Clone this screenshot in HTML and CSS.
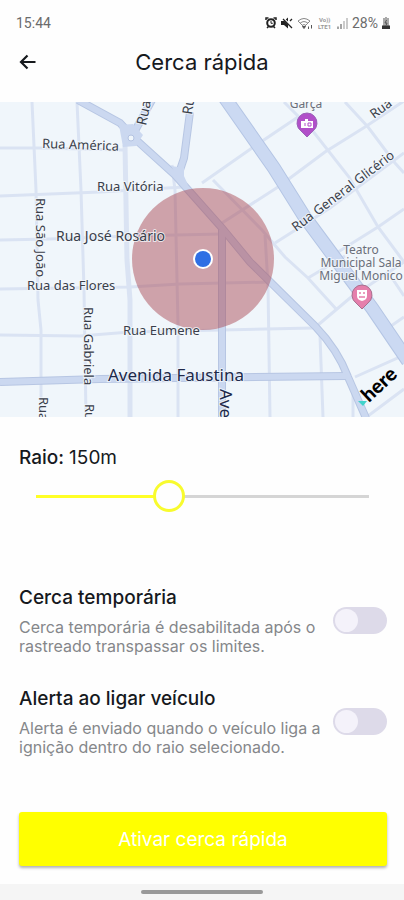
FILE: index.html
```html
<!DOCTYPE html>
<html lang="pt-BR">
<head>
    <meta charset="UTF-8">
    <meta name="viewport" content="width=device-width, initial-scale=1.0">
    <title>Cerca rápida</title>
    <link rel="stylesheet" href="styles.css">
</head>
<body>
    <div class="status-bar">
        <span>15:44</span>
        <div class="status-icons">
            <!-- alarm -->
            <svg width="12" height="12" viewBox="0 0 12 12">
                <path d="M1 3V1h2.500M8.500 1H11v2M2 11l1.500-1.500M10 11L8.500 9.500" stroke="#222" stroke-width="1.500" fill="none"/>
                <circle cx="6" cy="6" r="3.800" fill="none" stroke="#222" stroke-width="2"/>
                <path d="M6 4v2.300h1.800" stroke="#222" fill="none"/>
            </svg>
            <!-- muted -->
            <svg width="12" height="12" viewBox="0 0 12 12">
                <path d="M0 4h3l4-3.500v11L3 8H0z" fill="#222"/>
                <path d="M1 0l11 11" stroke="#fff" stroke-width="2"/>
                <path d="M2 2l9 9M9 4l2-2" stroke="#222" stroke-width="1.300"/>
            </svg>
            <!-- wifi -->
            <svg width="17" height="12" viewBox="0 0 17 12">
                <path d="M1 4q6-5 12 0M3 6.300q4-3.500 8 0M5 8.500q2-2 4 0M1 4l6 6 6-6" stroke="#888" fill="none"/>
                <path d="M7 11.500L5.500 9.500h3zM11.500 9.500V12M14.500 8v3.500" stroke="#555" fill="#555"/>
            </svg>
            <!-- volte -->
            <svg width="15" height="12" viewBox="0 0 15 12" class="volte">
                <text x="1" y="5">Vo))</text>
                <text x="0" y="12">LTE1</text>
            </svg>
            <!-- signal -->
            <svg width="11" height="12" viewBox="0 0 11 12">
                <path d="M1 9.500V12M4 7v5" stroke="#888" stroke-width="1.500"/>
                <path d="M7 4v8M10 1v11" stroke="#bbb" stroke-width="1.500"/>
            </svg>
            <span>28%</span>
            <!-- battery -->
            <svg width="8" height="12" viewBox="0 0 8 12">
                <path d="M3 0h2v1h2v11H1V1h2z" fill="#aaa"/>
                <path d="M0 8.500h8V12H0z" fill="#333"/>
                <path d="M4.500 3L3 6h2L4 8.500" stroke="#555" fill="none"/>
            </svg>
        </div>
    </div>

    <header class="header">
        <button class="back-button" type="button" aria-label="Voltar">
            <svg width="18" height="18" viewBox="0 0 18 18">
                <path d="M16.500 9H2.500M8.500 2.500L2 9l6.500 6.500" fill="none" stroke="#16191d" stroke-width="2.200"/>
            </svg>
        </button>
        <h1>Cerca rápida</h1>
    </header>

    <svg class="map" viewBox="0 102 404 315" role="img" aria-label="Mapa">
        <rect x="0" y="102" width="404" height="315" fill="#f0f6fb"/>

        <!-- small streets -->
        <g class="street">
            <path d="M32 102L36 190L38 300L41 330V417"/>
            <path d="M77 102L81 190L84 290L86 417"/>
            <path d="M172 165L175 190L178 325V417"/>
            <path d="M265 235L268 285L270 417M320 336L323 417M353 385V417"/>
            <path d="M0 148L40 148L123 150"/>
            <path d="M0 196L100 192L184 187"/>
            <path d="M0 240L50 239L130 236L222 234"/>
            <path d="M0 289L130 287L180 284L272 282"/>
            <path d="M0 335L80 336L130 332L313 328"/>
            <path d="M202 183L252 148L298 117"/>
            <path d="M222 223L278 187L325 152L365 127L404 101"/>
            <path d="M275 243L330 208L404 153"/>
            <path d="M338 252L378 227L404 209"/>
            <path d="M308 278L345 256M318 325L350 298L404 262"/>
            <path d="M355 377L404 355M368 416L404 389M391 326L404 317"/>
            <path d="M284 102L312 130L349 177L378 227L404 262"/>
            <path d="M345 102L368 127L395 163L404 173"/>
            <path d="M213 180L262 230L285 257L308 278L337 310"/>
            <path d="M392 278L404 296"/>
        </g>
        <path class="street wide" d="M125 145L127 260L130 300V417"/>

        <!-- avenues -->
        <g class="avenue-edge">
            <path d="M78 100L120 123L134 138L175 175L222 228L250 262L315 326Q338 350 348 377L366 418"/>
            <path d="M131 138L152 100M190 112L184 158L178 176"/>
            <path d="M0 382L100 379L346 376"/>
            <path d="M222 230V417"/>
        </g>
        <g class="avenue">
            <path d="M78 100L120 123L134 138L175 175L222 228L250 262L315 326Q338 350 348 377L366 418"/>
            <path d="M131 138L152 100M190 112L184 158L178 176"/>
            <path d="M0 382L100 379L346 376"/>
            <path d="M222 230V417"/>
        </g>
        <path class="highway-edge" d="M225 98L274 168L304 216L335 258L372 308L408 361"/>
        <path class="highway" d="M225 98L274 168L304 216L335 258L372 308L408 361"/>
        <path d="M119 125l14-1 10 11-7 11-13 1z" fill="#cbd8f0"/>
        <path d="M171 166l7 1 6-3v12l4 9-8-4z" fill="#cbd8f0"/>
        <circle cx="131" cy="138" r="3" fill="#f0f6fb" stroke="#b4c3e2"/>

        <!-- fence radius and position -->
        <circle cx="203" cy="259" r="71" fill="#a8444f" fill-opacity="0.47"/>
        <circle cx="203" cy="259" r="10" fill="#fff"/>
        <circle cx="203" cy="259" r="8" fill="#2f6fe4"/>

        <g class="label">
            <text x="42" y="148" transform="rotate(2 42 148)">Rua América</text>
            <text x="97" y="191">Rua Vitória</text>
            <text x="56" y="241" class="label-md">Rua José Rosário</text>
            <text x="27" y="290">Rua das Flores</text>
            <text x="123" y="335">Rua Eumene</text>
            <text x="108" y="381" class="label-lg">Avenida Faustina</text>
            <text x="36" y="198" transform="rotate(90 36 198)">Rua São João</text>
            <text x="84" y="307" transform="rotate(90 84 307)">Rua Gabriela</text>
            <text x="39" y="397" transform="rotate(90 39 397)">Rua</text>
            <text x="85" y="404" transform="rotate(90 85 404)">Rua</text>
            <text x="220" y="389" transform="rotate(90 220 389)" class="label-lg">Avenida</text>
            <text x="146" y="126" transform="rotate(-78 146 126)" class="label-md">Rua</text>
            <text x="192" y="115" transform="rotate(-82 192 115)" class="label-md">Rua</text>
            <text x="296" y="232" transform="rotate(-37 296 232)">Rua General Glicério</text>
            <text x="374" y="119" transform="rotate(-36 374 119)">Rua</text>
        </g>
        <g class="label place">
            <text x="306" y="108">Garça</text>
            <text x="361" y="254">Teatro</text>
            <text x="361" y="267">Municipal Sala</text>
            <text x="361" y="280">Miguel Monico</text>
        </g>

        <!-- pins -->
        <path d="M307 137l-6-6a10 10 0 1 1 12 0z" fill="#b14fc9" stroke="#9b62b8"/>
        <path d="M301 121h4v-2h3v2h5v7h-12z" fill="#fff"/>
        <path d="M305 123v3M308 123h3v3h-3z" fill="none" stroke="#b14fc9"/>
        <path d="M362 309l-6-6a10 10 0 1 1 12 0z" fill="#e57fac" stroke="#a8708f"/>
        <path d="M357 290h10v6q0 4-5 5-5-1-5-5z" fill="#fff"/>
        <path d="M359 293h2M363 293h2M359 297h6" stroke="#e57fac" stroke-width="1.500"/>

        <!-- here logo -->
        <path d="M358 401h9l-4 5z" fill="#41d3cb"/>
        <text class="here" x="369" y="403" transform="rotate(-43 369 403)">here</text>
    </svg>

    <main>
        <label class="radius-label" for="radius">Raio: <output id="radiusValue">150m</output></label>
        <input class="radius-slider" type="range" id="radius" min="50" max="300" value="150" style="--fill: 40%">

        <div class="setting">
            <div class="setting-text">
                <h2><label for="temporary">Cerca temporária</label></h2>
                <p>Cerca temporária é desabilitada após o rastreado transpassar os limites.</p>
            </div>
            <input class="switch" type="checkbox" id="temporary">
        </div>
        <div class="setting">
            <div class="setting-text">
                <h2><label for="ignition">Alerta ao ligar veículo</label></h2>
                <p>Alerta é enviado quando o veículo liga a ignição dentro do raio selecionado.</p>
            </div>
            <input class="switch" type="checkbox" id="ignition">
        </div>

        <button class="submit-button" type="button">Ativar cerca rápida</button>
    </main>

    <div class="nav-bar"><span></span></div>

    <script>
        const radius = document.getElementById('radius');
        radius.addEventListener('input', () => {
            const fill = (radius.value - radius.min) / (radius.max - radius.min) * 100;
            radius.style.setProperty('--fill', fill + '%');
            document.getElementById('radiusValue').textContent = radius.value + 'm';
        });
    </script>
</body>
</html>
```
FILE: styles.css
```css
* {
    box-sizing: border-box;
}
body {
    display: flex;
    flex-direction: column;
    min-height: 100vh;
    margin: 0;
    background-color: #fefefe;
    font-family: Inter, sans-serif;
    color: #16191d;
}
button {
    border: none;
    cursor: pointer;
    font-family: inherit;
}

.status-bar {
    display: flex;
    justify-content: space-between;
    align-items: center;
    height: 46px;
    padding: 0 14px 0 16px;
    font-family: Roboto, sans-serif;
    font-size: 14px;
    color: #6b6b6b;
}
.status-icons {
    display: flex;
    align-items: center;
    gap: 4px;
}
.volte {
    font-size: 6px;
    font-weight: bold;
    fill: #999;
}
.header {
    display: grid;
    grid-template-columns: 56px 1fr 56px;
    align-items: center;
    height: 56px;
    padding-bottom: 24px;
}
.back-button {
    justify-self: center;
    display: flex;
    padding: 0;
    background: none;
}
.header h1 {
    margin: 0;
    font-size: 22px;
    font-weight: 400;
    line-height: 32px;
    text-align: center;
}

.map {
    display: block;
    width: 100%;
    font-family: "Noto Sans", sans-serif;
}
.street {
    fill: none;
    stroke: #dae3f3;
    stroke-width: 3;
}
.street.wide {
    stroke-width: 5;
}
.avenue-edge {
    fill: none;
    stroke: #b7c6e3;
    stroke-width: 8;
}
.avenue {
    fill: none;
    stroke: #cbd8f0;
    stroke-width: 6;
}
.highway-edge {
    fill: none;
    stroke: #b4c5e4;
    stroke-width: 14;
}
.highway {
    fill: none;
    stroke: #cbd9f2;
    stroke-width: 12;
}
.label {
    font-size: 13px;
    fill: #3a3f4b;
    stroke: #f4f8fc;
    stroke-width: 2px;
    stroke-opacity: 0.8;
    paint-order: stroke;
}
.label-md {
    font-size: 14px;
}
.label-lg {
    font-size: 17px;
    fill: #20294a;
}
.place {
    font-size: 12px;
    fill: #6a6f7a;
    text-anchor: middle;
}
.here {
    font-family: Lato, sans-serif;
    font-size: 20px;
    font-weight: 900;
}

main {
    display: flex;
    flex-direction: column;
    flex: 1;
    padding: 28px 17px 18px 19px;
}
.radius-label {
    font-size: 19px;
    font-weight: 500;
    line-height: 26px;
}
.radius-label output {
    font-weight: 400;
}
.radius-slider {
    appearance: none;
    height: 32px;
    margin: 9px 2px 73px 1px;
    background: linear-gradient(to right, #ffff26 var(--fill), #d5d5d5 var(--fill)) center / calc(100% - 32px) 3px no-repeat;
    cursor: pointer;
}
.radius-slider::-webkit-slider-thumb {
    appearance: none;
    width: 32px;
    height: 32px;
    border: 3px solid #f8fb2e;
    border-radius: 50%;
    background-color: #fefefe;
}
.setting {
    display: flex;
    justify-content: space-between;
    align-items: center;
    gap: 8px;
    margin-bottom: 30px;
}
.setting h2 {
    margin: 0 0 7px;
    font-size: 19px;
    font-weight: 500;
    line-height: 26px;
}
.setting p {
    margin: 0;
    font-size: 16px;
    line-height: 19px;
    color: #85878a;
}
.switch {
    appearance: none;
    flex-shrink: 0;
    width: 54px;
    height: 27px;
    margin: 0;
    padding: 2px;
    border-radius: 14px;
    background-color: #dddae9;
    cursor: pointer;
}
.switch::before {
    content: "";
    display: block;
    width: 23px;
    height: 23px;
    border-radius: 50%;
    background-color: #f4f2fa;
}
.switch:checked {
    background-color: #ffff00;
}
.switch:checked::before {
    margin-left: auto;
}
.submit-button {
    height: 54px;
    margin-top: auto;
    border-radius: 3px;
    background-color: #ffff00;
    box-shadow: 0 2px 3px rgba(0, 0, 0, 0.3);
    font-size: 19px;
    color: #ffffff;
}

.nav-bar {
    display: flex;
    justify-content: center;
    align-items: center;
    height: 16px;
    background-color: #f5f5f5;
}
.nav-bar span {
    width: 30%;
    height: 4px;
    border-radius: 2px;
    background-color: #999;
}
```
